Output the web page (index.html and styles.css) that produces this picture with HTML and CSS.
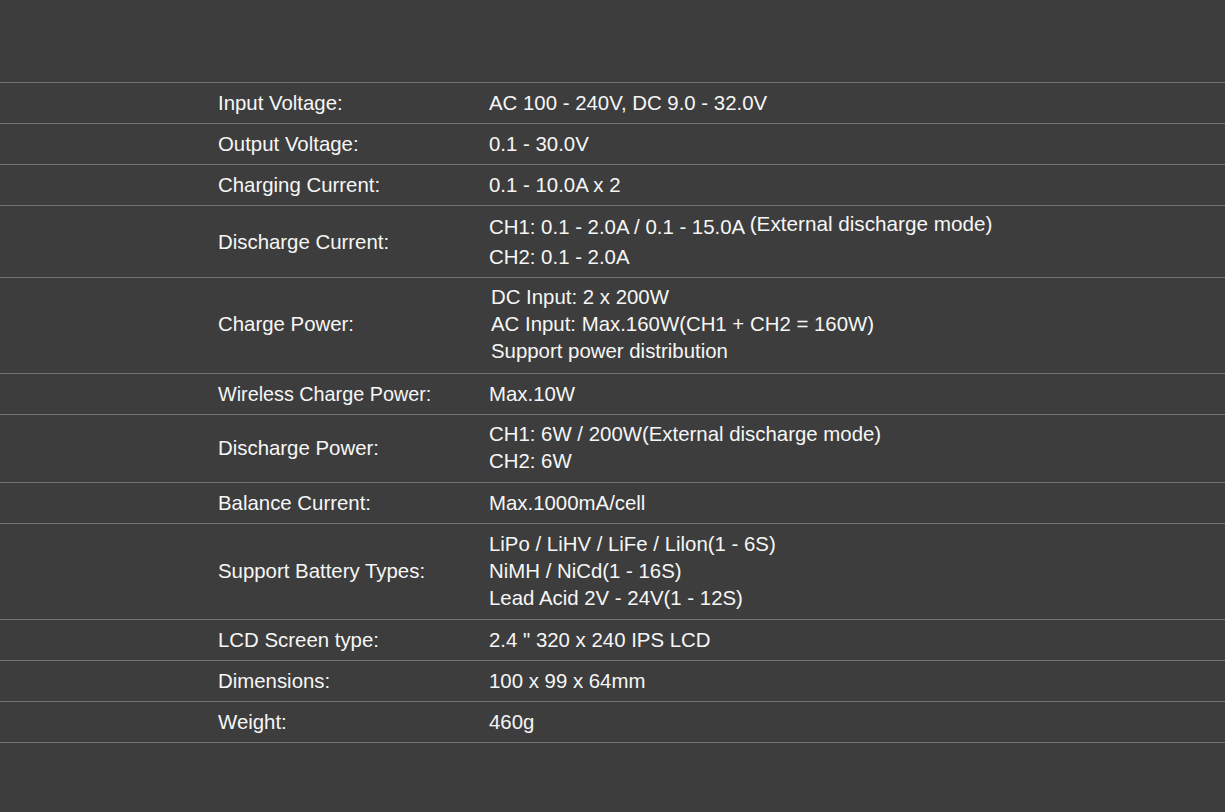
FILE: index.html
```html
<!DOCTYPE html>
<html>
	<head>
		<meta charset="utf-8">
		<title>Specifications</title>
		<link rel="stylesheet" href="styles.css">
	</head>
	<body>
		<!-- spec table, one row per parameter -->
		<div class="specs">
			<div class="row">
				<div class="label">Input Voltage:</div>
				<div class="value">AC 100 - 240V, DC 9.0 - 32.0V</div>
			</div>
			<div class="row">
				<div class="label">Output Voltage:</div>
				<div class="value">0.1 - 30.0V</div>
			</div>
			<div class="row">
				<div class="label">Charging Current:</div>
				<div class="value">0.1 - 10.0A x 2</div>
			</div>
			<div class="row tall dcur">
				<div class="label">Discharge Current:</div>
				<div class="value">
					<div>CH1: 0.1 - 2.0A / 0.1 - 15.0A <span class="note">(External discharge mode)</span></div>
					<div>CH2: 0.1 - 2.0A</div>
				</div>
			</div>
			<div class="row tall three cpow">
				<div class="label">Charge Power:</div>
				<div class="value shifted">
					<div>DC Input: 2 x 200W</div>
					<div>AC Input: Max.160W(CH1 + CH2 = 160W)</div>
					<div>Support power distribution</div>
				</div>
			</div>
			<div class="row">
				<div class="label small">Wireless Charge Power:</div>
				<div class="value">Max.10W</div>
			</div>
			<div class="row tall dpow">
				<div class="label">Discharge Power:</div>
				<div class="value">
					<div>CH1: 6W / 200W(External discharge mode)</div>
					<div>CH2: 6W</div>
				</div>
			</div>
			<div class="row">
				<div class="label">Balance Current:</div>
				<div class="value">Max.1000mA/cell</div>
			</div>
			<div class="row tall three bat">
				<div class="label">Support Battery Types:</div>
				<div class="value">
					<div>LiPo / LiHV / LiFe / Lilon(1 - 6S)</div>
					<div>NiMH / NiCd(1 - 16S)</div>
					<div>Lead Acid 2V - 24V(1 - 12S)</div>
				</div>
			</div>
			<div class="row">
				<div class="label">LCD Screen type:</div>
				<div class="value">2.4 " 320 x 240 IPS LCD</div>
			</div>
			<div class="row">
				<div class="label">Dimensions:</div>
				<div class="value">100 x 99 x 64mm</div>
			</div>
			<div class="row last">
				<div class="label">Weight:</div>
				<div class="value">460g</div>
			</div>
		</div>
	</body>
</html>
```
FILE: styles.css
```css
body
{
	margin:0;
	background:#3d3d3d;
	color:#f6f6f6;
	font-family:"Liberation Sans", Arial, sans-serif;
	font-size:20.4px;
	height:812px;
}

.specs
{
	padding-top:82px;
}

.row
{
	display:grid;
	grid-template-columns:271px 1fr;
	align-items:center;
	padding-left:218px;
	min-height:40px;
	line-height:40px;
	border-top:1px solid #737373;
}
.row.last
{
	border-bottom:1px solid #737373;
}

.label
{
	white-space:nowrap;
}
.label.small
{
	font-size:19.8px;
}

.tall
{
	line-height:27px;
}
.dcur
{
	line-height:30px;
	padding-top:6px;
	padding-bottom:5px;
}
.cpow
{
	padding-top:6px;
	padding-bottom:8px;
}
.dpow
{
	padding-top:6px;
	padding-bottom:7px;
}
.bat
{
	padding-top:7px;
	padding-bottom:7px;
}

.shifted
{
	padding-left:2px;
}

.note
{
	font-size:20.7px;
	line-height:1;
	vertical-align:3px;
}
```
